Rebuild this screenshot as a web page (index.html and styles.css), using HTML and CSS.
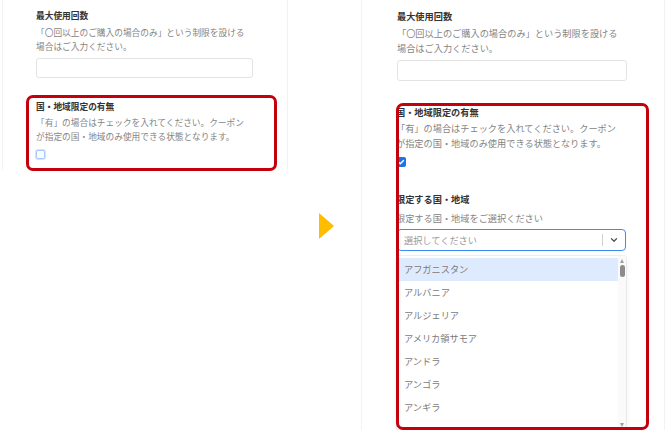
FILE: index.html
```html
<!DOCTYPE html>
<html lang="ja">
<head>
<meta charset="utf-8">
<link rel="stylesheet" href="styles.css">
</head>
<body>
<div class="page">
  <section class="panel panel-left">
    <div class="field">
      <div class="label">最大使用回数</div>
      <div class="desc">「〇回以上のご購入の場合のみ」という制限を設ける<br>場合はご入力ください。</div>
      <div class="input"></div>
    </div>
    <div class="field field-gap mark">
      <div class="label">国・地域限定の有無</div>
      <div class="desc desc-tight">「有」の場合はチェックを入れてください。クーポン<br>が指定の国・地域のみ使用できる状態となります。</div>
      <div class="check check-off"></div>
      <div class="frame frame-left"></div>
    </div>
  </section>

  <div class="arrow-col"><div class="arrow"></div></div>

  <section class="panel panel-right">
    <div class="field">
      <div class="label">最大使用回数</div>
      <div class="desc">「〇回以上のご購入の場合のみ」という制限を設ける<br>場合はご入力ください。</div>
      <div class="input"></div>
    </div>
    <div class="mark mark-right">
      <div class="field">
        <div class="label">国・地域限定の有無</div>
        <div class="desc desc-tight">「有」の場合はチェックを入れてください。クーポン<br>が指定の国・地域のみ使用できる状態となります。</div>
        <div class="check check-on">
          <svg viewBox="0 0 10 10" width="10" height="10"><path d="M2.6 5.2 L4.3 6.8 L7.5 3.4" fill="none" stroke="#fff" stroke-width="1.4" stroke-linecap="round" stroke-linejoin="round"/></svg>
        </div>
      </div>
      <div class="field field-country">
        <div class="label">限定する国・地域</div>
        <div class="desc desc-country">限定する国・地域をご選択ください</div>
        <div class="select">
          <span class="placeholder">選択してください</span>
          <span class="sep"></span>
          <svg class="chev" viewBox="0 0 10 10" width="10" height="10"><path d="M2.5 3.8 L5 6.3 L7.5 3.8" fill="none" stroke="#555" stroke-width="1.3" stroke-linecap="round" stroke-linejoin="round"/></svg>
        </div>
        <div class="menu">
          <ul class="options">
            <li class="opt active">アフガニスタン</li>
            <li class="opt">アルバニア</li>
            <li class="opt">アルジェリア</li>
            <li class="opt">アメリカ領サモア</li>
            <li class="opt">アンドラ</li>
            <li class="opt">アンゴラ</li>
            <li class="opt">アンギラ</li>
          </ul>
          <div class="scrollbar">
            <span class="sb-up"></span>
            <span class="sb-thumb"></span>
            <span class="sb-fill"></span>
            <span class="sb-down"></span>
          </div>
        </div>
      </div>
      <div class="frame frame-right"></div>
    </div>
  </section>
</div>
</body>
</html>
```

FILE: styles.css
```css
* { box-sizing: border-box; }
html, body {
  margin: 0;
  padding: 0;
  background: #fff;
  width: 670px;
  height: 430px;
  overflow: hidden;
}
body {
  font-family: "Noto Sans CJK JP", "Noto Sans", sans-serif;
  color: #333;
}
.page {
  display: flex;
  align-items: flex-start;
  height: 430px;
  padding-left: 2px;
}
.panel {
  border-left: 1px solid #f2f2f2;
  border-right: 1px solid #f2f2f2;
}
.panel-left {
  width: 286px;
  height: 170px;
  padding: 9px 0 0 33px;
  font-size: 8.7px;
  line-height: 14px;
}
.panel-left .field { width: 217px; }
.label {
  font-weight: 700;
  color: #333;
  white-space: nowrap;
}
.desc {
  color: #858585;
  margin-top: 3px;
  white-space: nowrap;
}
.desc-tight { margin-top: 2px; }
.input {
  margin-top: 4px;
  height: 20px;
  border: 1px solid #e3e3e3;
  border-radius: 3px;
  background: #fff;
}
.field-gap { margin-top: 22px; }
.mark { position: relative; }
.check {
  margin-top: 6px;
  width: 10px;
  height: 10px;
  border-radius: 2px;
}
.check-off {
  width: 9px;
  height: 9px;
  border: 1.5px solid #a3c8fb;
  background: #fff;
  box-shadow: 0 0 0 1px rgba(120, 170, 250, 0.3);
}
.check-on {
  background: #1a73e8;
  display: flex;
}
.frame {
  position: absolute;
  border: 3px solid #c3000c;
  border-radius: 7px;
  pointer-events: none;
}
.frame-left {
  top: -5px;
  left: -10px;
  right: -24px;
  bottom: -12px;
}

.arrow-col {
  width: 73px;
  padding: 213px 0 0 31px;
}
.arrow {
  width: 0;
  height: 0;
  border-top: 13.5px solid transparent;
  border-bottom: 13.5px solid transparent;
  border-left: 15px solid #ffbd00;
}

.panel-right {
  width: 304px;
  height: 430px;
  padding: 9px 0 0 35px;
  font-size: 9.2px;
  line-height: 15px;
}
.panel-right .field { width: 230px; }
.panel-right .desc { margin-top: 2px; }
.panel-right .input { height: 21px; }
.panel-right .desc-tight { margin-top: 1px; }
.mark-right {
  margin-top: 24px;
  margin-left: -1px;
  width: 231px;
}
.panel-right .check { margin-top: 6px; }
.field-country { margin-top: 25px; }
.panel-right .desc-country { margin-top: 4px; }
.select {
  margin-top: 3px;
  height: 22px;
  border: 1.3px solid #3b8cf5;
  border-radius: 4px;
  display: flex;
  align-items: center;
  padding-left: 6px;
  padding-right: 6px;
  margin-left: 1px;
}
.placeholder {
  flex: 1;
  color: #9a9a9a;
}
.sep {
  width: 1px;
  height: 12px;
  background: #d2d2d2;
  margin-right: 6px;
}
.chev { display: block; }
.menu {
  margin-top: 5px;
  margin-left: 1px;
  height: 173px;
  display: flex;
  background: #fff;
  box-shadow: 0 0 0 1px rgba(0, 0, 0, 0.05), 0 2px 6px rgba(0, 0, 0, 0.08);
  border-radius: 3px 3px 0 0;
  overflow: hidden;
  padding-top: 2px;
}
.options {
  list-style: none;
  margin: 0;
  padding: 0;
  flex: 1;
}
.opt {
  height: 23px;
  line-height: 23px;
  padding-left: 7px;
  color: #7a7a7a;
}
.opt.active { background: #deebff; }
.scrollbar {
  width: 8px;
  display: flex;
  flex-direction: column;
  align-items: center;
  background: #fafafa;
  margin-top: -2px;
  padding: 3px 0 2px;
}
.sb-up, .sb-down {
  width: 0;
  height: 0;
  border-left: 2.5px solid transparent;
  border-right: 2.5px solid transparent;
}
.sb-up { border-bottom: 4px solid #a0a0a0; }
.sb-down { border-top: 4px solid #a0a0a0; }
.sb-thumb {
  margin-top: 2px;
  width: 5px;
  height: 12px;
  border-radius: 3px;
  background: #8c8c8c;
}
.sb-fill { flex: 1; }
.frame-right {
  top: -2px;
  left: 0;
  right: -22px;
  height: 327px;
}
```
